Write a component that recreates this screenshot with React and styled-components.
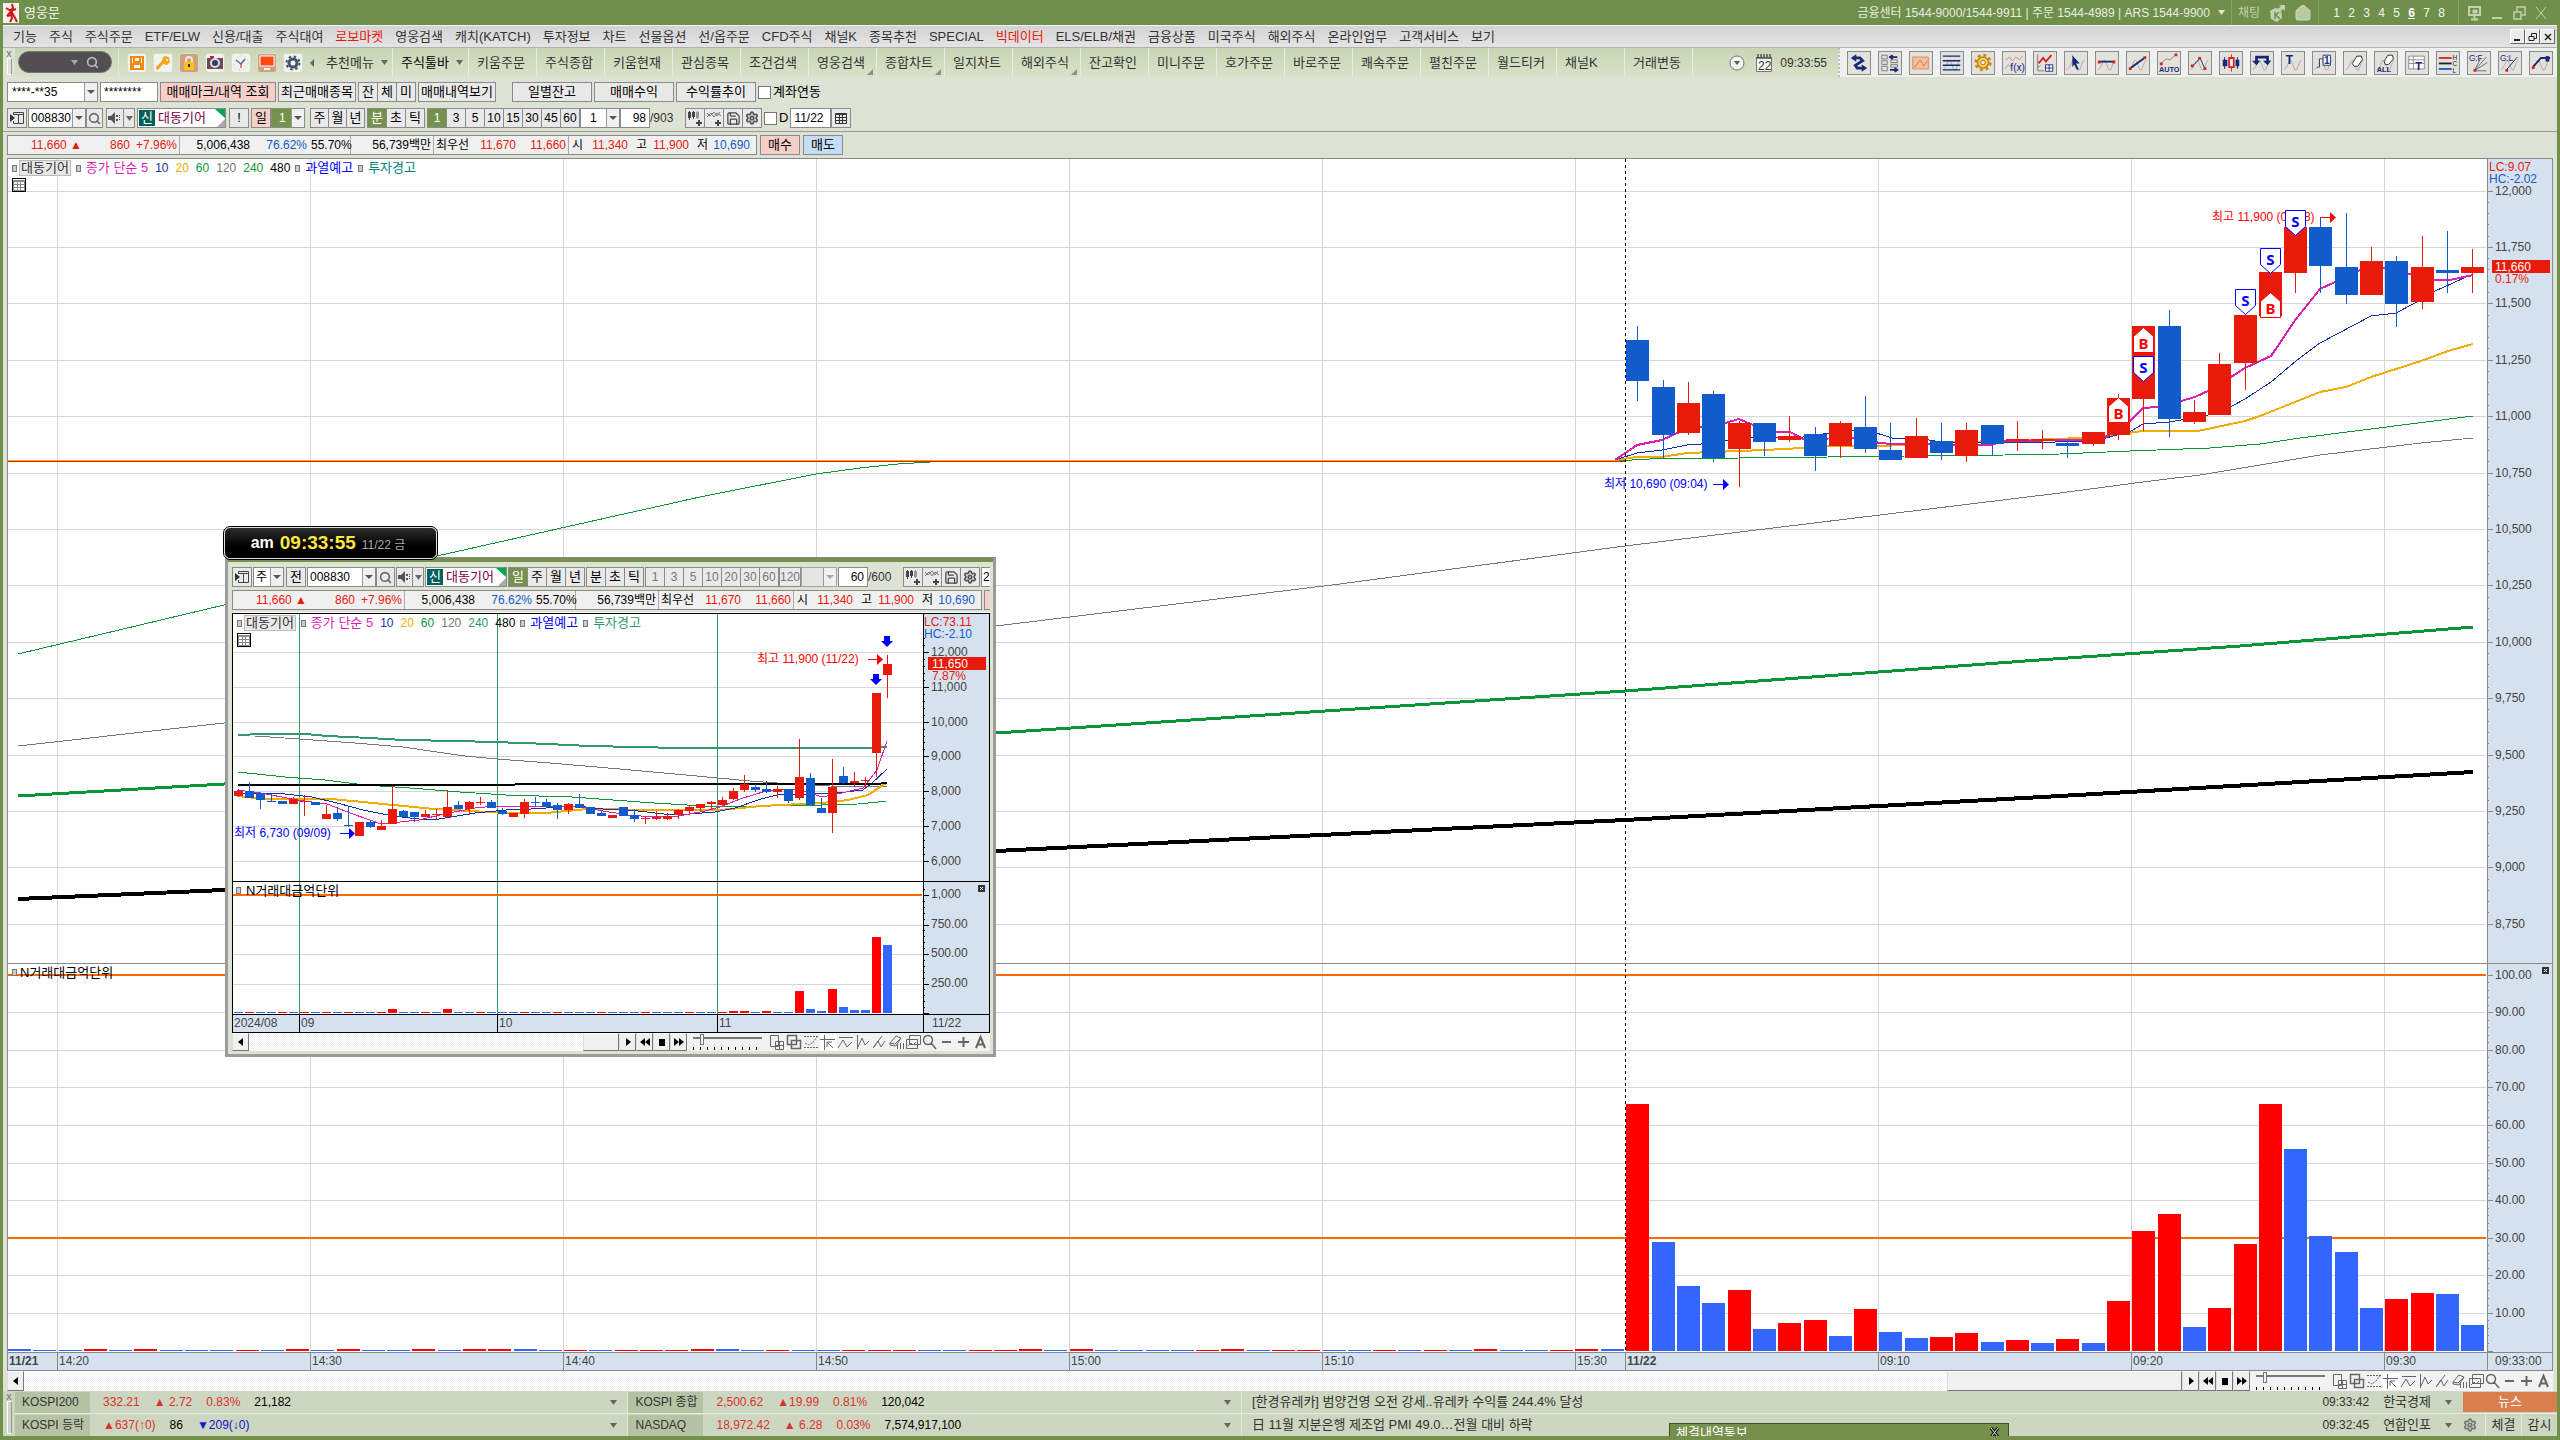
import * as React from "react";
import styled, { createGlobalStyle } from "styled-components";
import { Search, Settings, Save, Home } from "lucide-react";

const GlobalStyle = createGlobalStyle`
  * {
    box-sizing: border-box;
  }
  body {
    margin: 0;
    background: #dce2d4;
    color: #333;
    font: 13px/16px "Liberation Sans", "Noto Sans CJK KR", sans-serif;
  }
  button, input, select {
    margin: 0;
    padding: 0;
    font: inherit;
    color: inherit;
  }
  button {
    border: 0;
    background: none;
    white-space: nowrap;
  }
  svg {
    display: block;
    flex: none;
  }
  svg text {
    font: 12px "Liberation Sans", "Noto Sans CJK KR", sans-serif;
  }
`;

const RED = "#e81a0a";
const BLUE = "#125bca";
const NAVY = "#1430a8";
const MAGENTA = "#dc1eb4";
const GOLD = "#f0ac00";
const GREEN = "#0a9638";

/* ---------- window frame ---------- */

const Desktop = styled.div`
  position: relative;
  height: 100vh;
  display: flex;
  flex-direction: column;
  border-left: 3px solid #6f8f4b;
  border-right: 3px solid #6f8f4b;
  border-bottom: 4px solid #75904a;
  overflow: hidden;
`;

const TitleBar = styled.header`
  height: 25px;
  display: flex;
  align-items: center;
  background: #6f8f4b;
  color: #f2f5ec;
  .name {
    flex: 1;
    margin-left: 4px;
  }
`;

const TitleGroup = styled.div`
  height: 25px;
  display: flex;
  align-items: center;
  gap: 8px;
  padding: 0 6px;
  font-size: 12px;
  border-left: ${(p) => (p.$first ? "0" : "1px solid #86a365")};
  color: ${(p) => p.color || "#e8eee0"};
`;

const Screens = styled.div`
  display: flex;
  padding: 0 3px 0 4px;
  button {
    width: 15px;
    color: #f4f6ee;
  }
  .on {
    font-weight: bold;
    text-decoration: underline;
    color: #fff;
  }
`;

const MenuBar = styled.nav`
  height: 23px;
  display: flex;
  align-items: center;
  gap: 12px;
  padding: 0 2px 0 10px;
  border-top: 1px solid #f4f4f4;
  border-bottom: 1px solid #b0b0b0;
  background: linear-gradient(#d3d3d3, #e4e4e4);
  a {
    text-decoration: none;
    color: #333;
    white-space: nowrap;
  }
  a.hot {
    color: ${RED};
  }
  .mdi {
    margin-left: auto;
    display: flex;
  }
`;

const MdiButton = styled.button`
  width: 15px;
  height: 15px;
  display: grid;
  place-items: center;
  background: #ececec;
  border: 1px solid;
  border-color: #fff #666 #666 #fff;
`;

const ToolStrip = styled.div`
  height: 29px;
  display: flex;
  background: linear-gradient(#c9d4b4, #d9e2c9);
`;

const Grip = styled.div`
  width: 12px;
  flex: none;
  display: flex;
  flex-direction: column;
  align-items: center;
  color: #777;
  font-size: 11px;
  line-height: 10px;
  background: ${(p) => (p.$light ? "#dce2d4" : "none")};
  i {
    flex: 1;
    width: 5px;
    margin-bottom: 2px;
    border: 1px solid #fff;
    border-right-color: #999;
  }
`;

const SearchPill = styled.div`
  width: 94px;
  height: 22px;
  margin: 3px 6px 0 3px;
  padding-right: 12px;
  display: flex;
  align-items: center;
  justify-content: flex-end;
  gap: 8px;
  border-radius: 11px;
  border: 1px solid #777;
  background: #524f52;
  color: #bbb;
  input {
    flex: 1;
    min-width: 0;
    border: 0;
    background: none;
    outline: 0;
    padding-left: 10px;
  }
`;

const QuickIcons = styled.div`
  display: flex;
  align-items: center;
  gap: 6px;
  padding: 0 7px 0 8px;
  border-left: 1px solid #e2e9d6;
  button {
    width: 20px;
    height: 20px;
    display: grid;
    place-items: center;
    border-radius: 3px;
    border: 1px solid #d9dccf;
    background: #f2f2ee;
  }
  .brown {
    background: #cf9f80;
  }
`;

const StripTab = styled.button`
  position: relative;
  flex: none;
  width: ${(p) => p.$w || 68}px;
  padding: 0 0 0 8px;
  display: flex;
  align-items: center;
  gap: 7px;
  border-right: 1px solid #e6ecdb;
  color: ${(p) => (p.$strong ? "#000" : "#333")};
  &::after {
    content: "";
    display: ${(p) => (p.$corner ? "block" : "none")};
    position: absolute;
    right: 3px;
    bottom: 2px;
    border: 3px solid #8b9480;
    border-top-color: transparent;
    border-left-color: transparent;
  }
`;

const StripClock = styled.div`
  margin-left: auto;
  display: flex;
  align-items: center;
  gap: 7px;
  padding-right: 11px;
  svg + svg {
    margin-left: 3px;
  }
  span {
    font-size: 12px;
  }
`;

const DrawTools = styled.div`
  display: flex;
  align-items: center;
  gap: 7px;
  padding: 0 4px 0 7px;
  background: #f0f0f0;
  border-left: 2px dotted #bbb;
  button {
    width: 24px;
    height: 24px;
    border: 1px solid #8c8c8c;
    background: #e3e1dc;
  }
`;

/* ---------- controls ---------- */

const ControlRow = styled.div`
  display: flex;
  align-items: center;
  gap: ${(p) => p.$gap || 0}px;
  height: 20px;
  white-space: nowrap;
  overflow: hidden;
`;

const Count = styled.span`
  width: 31px;
  flex: none;
  font-size: 12px;
`;

const Button = styled.button`
  flex: none;
  width: ${(p) => p.$w}px;
  height: 20px;
  display: grid;
  place-items: center;
  border: 1px solid #8a8a8a;
  font-size: ${(p) => (p.$small ? 12 : 13)}px;
  color: ${(p) => (p.$on ? "#fff" : p.$dim ? "#777" : "#000")};
  background: ${(p) => (p.$on ? "#75924c" : p.$bg || "#e9e9e9")};
`;

const Group = styled.div`
  flex: none;
  display: flex;
  margin-right: ${(p) => p.$mr || 0}px;
  ${Button} + ${Button} {
    border-left: 0;
  }
`;

const TextBox = styled.input`
  flex: none;
  width: ${(p) => p.$w}px;
  height: 20px;
  padding: 0 ${(p) => p.$pad || 3}px;
  border: 1px solid #8a8a8a;
  border-radius: 0;
  font-size: 12px;
  background: #fff;
  color: #000;
  text-align: ${(p) => p.$align || "left"};
`;

const SelectWrap = styled.span`
  position: relative;
  flex: none;
  width: ${(p) => p.$w}px;
  height: 20px;
  select {
    width: 100%;
    height: 20px;
    padding: 0 13px 0 ${(p) => p.$pad || 2}px;
    appearance: none;
    border: 1px solid #8a8a8a;
    border-radius: 0;
    font-size: 12px;
    color: ${(p) => (p.$on ? "#fff" : "#000")};
    background: ${(p) => (p.$on ? "#75924c" : p.$off ? "#e9e9e9" : "#fff")};
  }
  svg {
    position: absolute;
    top: 1px;
    right: 1px;
    pointer-events: none;
  }
`;

const Check = styled.label`
  flex: none;
  display: flex;
  align-items: center;
  gap: 2px;
  color: #000;
  input {
    appearance: none;
    width: 13px;
    height: 13px;
    border: 1px solid #777;
    background: #fff;
  }
`;

const StockName = styled.div`
  flex: none;
  width: ${(p) => p.$w}px;
  height: 20px;
  display: flex;
  align-items: center;
  justify-content: space-between;
  border: 1px solid #8a8a8a;
  background: #fff;
  color: #7a0046;
  b {
    width: 16px;
    height: 16px;
    margin: 0 3px 0 1px;
    display: grid;
    place-items: center;
    font-weight: normal;
    background: #00605c;
    color: #fff;
  }
  span {
    flex: 1;
  }
`;

const Quote = styled.div`
  flex: none;
  width: 750px;
  height: 20px;
  display: flex;
  align-items: center;
  border: 1px solid #8a8a8a;
  background: #f0f0f0;
  color: #000;
  font-size: 12px;
`;

const Cell = styled.span`
  width: ${(p) => p.$w}px;
  height: 18px;
  line-height: 18px;
  padding: 0 2px;
  text-align: ${(p) => p.$align || "right"};
  color: ${(p) => p.color || "#000"};
  border-right: ${(p) => (p.$line ? "1px solid #aaa" : "0")};
`;

const Down = ({ color = "#666" }) => (
  <svg width="7" height="5"><path d="M0 0h7L3.5 5z" fill={color} /></svg>
);

function Arrow({ dim }) {
  return (
    <svg width="13" height="18" viewBox="0 0 13 18">
      <rect width="13" height="18" fill="#f0f0f0" />
      <path d="M0.5 0V18" stroke="#999" />
      <path d="M3 7h8l-4 4z" fill={dim ? "#aaa" : "#555"} />
    </svg>
  );
}

function Select({ label, value, w, on, disabled, pad }) {
  return (
    <SelectWrap $w={w} $on={on} $pad={pad} $off={disabled}>
      <select aria-label={label} disabled={disabled}>
        <option>{value}</option>
      </select>
      <Arrow dim={disabled} />
    </SelectWrap>
  );
}

function Buttons({ items, on, w = 19, dim, mr, small }) {
  return (
    <Group $mr={mr}>
      {items.map((t, i) => (
        <Button key={t} $w={i ? w : w + 1} $on={t === on} $dim={dim} $small={small}>
          {t}
        </Button>
      ))}
    </Group>
  );
}

function QuoteBar() {
  return (
    <Quote>
      <Cell $w={76} color={RED}>11,660 ▲</Cell>
      <Cell $w={48} color={RED}>860</Cell>
      <Cell $w={48} color={RED} $line>+7.96%</Cell>
      <Cell $w={72}>5,006,438</Cell>
      <Cell $w={57} color={BLUE}>76.62%</Cell>
      <Cell $w={42} $line>55.70%</Cell>
      <Cell $w={83} $line>56,739백만</Cell>
      <Cell $w={42} $align="left">최우선</Cell>
      <Cell $w={42} color={RED}>11,670</Cell>
      <Cell $w={51} color={RED} $line>11,660</Cell>
      <Cell $w={16}>시</Cell>
      <Cell $w={45} color={RED}>11,340</Cell>
      <Cell $w={19}>고</Cell>
      <Cell $w={42} color={RED}>11,900</Cell>
      <Cell $w={19}>저</Cell>
      <Cell $w={42} color={BLUE}>10,690</Cell>
    </Quote>
  );
}

const PanelIcon = () => (
  <svg width="16" height="14" viewBox="0 0 16 14" fill="none" stroke="#444">
    <path d="M4.5 4V1.5h10v11h-10V10M5 3.5h9M9.5 4v8" />
    <path d="M1 3l5 4-5 4z" fill="#333" stroke="none" />
  </svg>
);

const SpeakerIcon = () => (
  <svg width="14" height="14" viewBox="0 0 14 14" fill="#555">
    <path d="M0 5h3l4-4v12L3 9H0zM8 4h2v2H8zM8 8h2v2H8zM11 4h1v1h-1zM11 6h1v1h-1zM11 8h1v1h-1z" />
  </svg>
);

const CandlePlusIcon = () => (
  <svg width="16" height="16" viewBox="0 0 16 16" fill="#444">
    <path d="M2 1h1v1h1v6H3v2H2V8H1V2h1zM6 1h1v1h1v5H7v2H6V7H5V2h1z" />
    <path d="M10 1h1v1h1v6h-1v1h-1V8H9V2h1z" fill="#999" />
    <path d="M11 10h2v2h2v2h-2v2h-2v-2H9v-2h2z" />
  </svg>
);

const WavePlusIcon = () => (
  <svg width="16" height="16" viewBox="0 0 16 16" fill="none" stroke="#777">
    <path d="M1 7l4-4 3 4 3-4 4 3M1 3l3 3 4-4 3 4 3-4" />
    <path d="M11 10h2v2h2v2h-2v2h-2v-2H9v-2h2z" fill="#444" stroke="none" />
  </svg>
);

const CalendarIcon = ({ color = "#333" }) => (
  <svg width="12" height="12" viewBox="0 0 12 12" fill="none" stroke={color}>
    <path d="M0.5 1.5h11v10h-11zM1 2.5h10M1 5.5h10M1 8.5h10M4.5 3v8M7.5 3v8" />
  </svg>
);

const Corner = () => (
  <svg width="10" height="18" viewBox="0 0 10 18">
    <path d="M0 0h10v9z" fill="#00a650" />
    <path d="M10 10v8H2z" fill="#aaa" />
  </svg>
);

function ChartTools({ mr }) {
  return (
    <Group $mr={mr}>
      <Button $w={20} aria-label="봉 추가"><CandlePlusIcon /></Button>
      <Button $w={19} aria-label="지표 추가"><WavePlusIcon /></Button>
      <Button $w={19} aria-label="저장"><Save size={15} color="#444" /></Button>
      <Button $w={19} aria-label="설정"><Settings size={14} color="#555" strokeWidth={3} /></Button>
    </Group>
  );
}

/* ---------- toolbar icons ---------- */

const wave = <path d="M2 19l3-3 3-7h2l4 10h2l3-8 2-3" stroke="#aaa" />;
const N = "#142a78";
const R = "#d82020";

const drawIcons = [
  ["되돌리기", <g><path d="M8 6h5l3 3-8 5 2 3h6" stroke={N} strokeWidth="3" /><path d="M9 2v8L3 6zM15 13v8l6-4z" fill={N} /></g>],
  ["연결", <g><path d="M3 3h6v4H3zM3 9h6v4H3zM3 15h6v5H3zM13 8h7v3h-7zM13 13h7v3h-7z" stroke="#777" /><path d="M20 5h-8m3-2l-3 2 3 2M12 19h8m-3-2l3 2-3 2" stroke={N} strokeWidth="2" /></g>],
  ["영역", <g><path d="M3 5h17v13H3z" fill="#f6c0a0" stroke="#e08850" /><path d="M4 16l3-2 3-5h2l3 6 4-6" stroke="#d07a40" /></g>],
  ["수평선", <g>{wave}<path d="M2 4h19M2 9h19M2 14h19M2 19h19" stroke={N} strokeWidth="1.5" /></g>],
  ["설정", <g><circle cx="12" cy="11" r="8" stroke="#c88a18" strokeWidth="3" strokeDasharray="3.2 3.1" /><circle cx="12" cy="11" r="6" stroke="#c88a18" strokeWidth="2" fill="#ffd468" /><circle cx="12" cy="11" r="2.5" fill="#eee" stroke="#a86a00" /></g>],
  ["수식", <g><path d="M3 8l4-3 3 4 4-4 4 3 3-4" stroke="#e08080" /><path d="M2 18l4-5 3 4" stroke="#aaa" /><text x="8" y="20" fill={N} style={{ fontSize: 11 }}>f(x)</text></g>],
  ["분석", <g><path d="M4 2v18h7M4 17l3-3" stroke="#777" /><path d="M5 12l5-6 3 4 6-7" stroke={R} strokeWidth="2" /><path d="M12.5 13.5h8v7h-8zM16.5 13v7M12 17h8" fill="#fff" stroke={N} /></g>],
  ["선택", <g>{wave}<path d="M8 3l8 9h-4l3 6-2 1-3-6-2 3z" fill={N} /></g>],
  ["가로선", <g>{wave}<path d="M3 10h17" stroke={N} strokeWidth="2" /><path d="M2 9h3v3H2zM18 9h3v3h-3z" fill={R} /></g>],
  ["추세선", <g>{wave}<path d="M4 17L19 6" stroke={N} strokeWidth="2" /><path d="M2 16h3v3H2zM18 4h3v3h-3z" fill={R} /></g>],
  ["자동", <g><path d="M3 12l6-5 4 1 7-6" stroke="#888" /><path d="M2 11h3v3H2zM18 1h3v3h-3z" fill={R} /><text x="1" y="21" fill={N} style={{ fontSize: 8, fontWeight: 700 }}>AUTO</text></g>],
  ["파동", <g>{wave}<path d="M4 14l4-3 4-5 5 11" stroke={N} /><path d="M2 13h3v3H2zM10 5h3v3h-3zM16 16h3v3h-3z" fill={R} /></g>],
  ["봉", <g><path d="M5 5v13M19 5v13" stroke={N} /><path d="M3 8h5v7H3zM17 8h4v7h-4z" fill={N} /><path d="M10 6h5v10h-5z" fill="#fff" stroke={R} strokeWidth="2" /><path d="M12.5 2v3M12.5 17v4" stroke={R} /></g>],
  ["회전", <g>{wave}<path d="M6 11V5h12v6" stroke={N} strokeWidth="3" /><path d="M1 9h9l-4 5zM13 9h9l-4 5z" fill={N} /></g>],
  ["문자", <g>{wave}<text x="4" y="13" fill={N} style={{ fontSize: 13, fontWeight: 700 }}>T</text></g>],
  ["번호", <g>{wave}<path d="M4 16h3V7h4M11 3h8v11h-8z" fill="#fff" stroke={N} /><text x="12" y="13" fill={N} style={{ fontSize: 11, fontWeight: 700 }}>1</text></g>],
  ["지우개", <g>{wave}<path d="M9 12l5-8h5l1 4-5 7h-4z" fill="#fff" stroke="#222" /></g>],
  ["모두 지우기", <g>{wave}<path d="M10 10l4-7h5l1 4-5 6h-4z" fill="#fff" stroke="#222" /><text x="2" y="21" fill={N} style={{ fontSize: 8, fontWeight: 700 }}>ALL</text></g>],
  ["표", <g><path d="M3 4h17v14H3zM3 8h17M3 12h17M8 4v14" fill="#fff" stroke="#888" /><text x="10" y="19" fill={N} style={{ fontSize: 12, fontWeight: 700 }}>T</text></g>],
  ["고저", <g><path d="M2 6h14" stroke={R} strokeWidth="2" /><path d="M2 12h14" stroke="#222" strokeWidth="2" /><path d="M2 18h14" stroke={BLUE} strokeWidth="2" /><text x="17" y="8" fill="#222" style={{ fontSize: 7 }}>H</text><text x="17" y="15" fill="#222" style={{ fontSize: 7 }}>C</text><text x="17" y="22" fill="#222" style={{ fontSize: 7 }}>L</text></g>],
  ["간 팬", <g><path d="M7 20L20 5M7 20l14-9M7 20h13M7 20L14 6" stroke="#667" /><path d="M6 18h3v3H6z" fill={R} /><text x="1" y="9" fill={N} style={{ fontSize: 9 }}>G:F</text></g>],
  ["간 선", <g>{wave}<path d="M8 19L20 5" stroke={N} /><path d="M7 18h3v3H7z" fill={R} /><text x="1" y="9" fill={N} style={{ fontSize: 9 }}>G:L</text></g>],
  ["채널", <g>{wave}<path d="M3 16l9-10h10" stroke={N} strokeWidth="2" /><path d="M17 4h4v6h-4z" fill={N} /><path d="M2 15h3v3H2z" fill={R} /></g>],
];

const quickIcons = [
  ["저장", "", <path d="M2 2h12v12H2zM5 2h6v5H5zM4 9h8v5H4z" fill="#fff" stroke="#f08a10" strokeWidth="2" />],
  ["열쇠", "", <g><path d="M10 1l4 1 1 5-3 3-4-1-5 6-2-1v-2l6-6 1-4z" fill="#f8a820" /><circle cx="12" cy="5" r="1" fill="#fff" /></g>],
  ["잠금", "brown", <g><path d="M5 8V5a3 3 0 016 0v3" stroke="#f5ead0" strokeWidth="2" /><path d="M3 7h10v8H3z" fill="#ffc020" /><path d="M8 9v3" stroke="#333" strokeWidth="2" /></g>],
  ["화면 캡처", "", <g><path d="M0 3h16v11H0z" fill="#6b4a52" /><path d="M3 1h4v2H3z" fill={R} /><circle cx="8" cy="8" r="5" fill="#ddd" /><circle cx="8" cy="8" r="3" fill="#30406a" /></g>],
  ["시계", "", <g stroke="#667"><circle cx="8" cy="8" r="7" stroke="#bbb" strokeDasharray="1 3" /><path d="M3 5l5 4 4-5" strokeWidth="1.5" /><path d="M8 9v4" stroke={R} /></g>],
  ["모니터", "brown", <g><path d="M1 1h14v10H1z" fill="#ff4a10" stroke="#fff" /><path d="M5 14h6" stroke="#fff" strokeWidth="2" /></g>],
  ["설정", "", <g><circle cx="8" cy="8" r="4" stroke="#46566a" strokeWidth="3" /><circle cx="8" cy="8" r="6.5" stroke="#46566a" strokeWidth="2" strokeDasharray="2.5 2.6" /></g>],
];

/* ---------- chart ---------- */

const ChartBox = styled.section`
  position: relative;
  flex: 1;
  min-height: 0;
  margin: 0 4px;
  background: #fff;
  > svg {
    width: 100%;
    height: 100%;
  }
`;

const Legend = styled.div`
  position: absolute;
  top: 2px;
  left: 5px;
  display: flex;
  align-items: center;
  gap: 5px;
  font-size: 12px;
  white-space: nowrap;
  i {
    width: 5px;
    height: 7px;
    border: 1px solid #777;
    background: #ccc;
  }
  b {
    font-size: 13px;
    font-weight: normal;
    margin-left: -3px;
    padding: 0 1px;
    border: 1px solid #bbb;
    background: #e8e8e8;
    line-height: 14px;
  }
  span + span {
    margin-left: 2px;
  }
  .wide {
    font-size: 13px;
  }
`;

const TableButton = styled.button`
  position: absolute;
  top: 20px;
  left: 5px;
  width: 14px;
  height: 14px;
  display: grid;
  place-items: center;
  border: 1px solid #000;
  background: #fff;
`;

function ChartLegend({ alt }) {
  return (
    <>
      <Legend>
        <i />
        <b>대동기어</b>
        <i />
        <span className="wide" style={{ color: MAGENTA }}>종가 단순 5</span>
        <span style={{ color: NAVY }}>10</span>
        <span style={{ color: GOLD }}>20</span>
        <span style={{ color: GREEN }}>60</span>
        <span style={{ color: "#777" }}>120</span>
        <span style={{ color: alt ? "#339966" : GREEN }}>240</span>
        <span style={{ color: "#000" }}>480</span>
        <i />
        <span className="wide" style={{ color: "#00f" }}>과열예고</span>
        <i />
        <span className="wide" style={{ color: alt ? "#339966" : "#008080" }}>투자경고</span>
      </Legend>
      <TableButton aria-label="데이터 표">
        <CalendarIcon color="#888" />
      </TableButton>
    </>
  );
}

const fmt = (n) => n.toLocaleString("en-US");

// kind, left, body top, body bottom, high, low
const candles = [
  ["b", 1626, 340, 381, 326, 401],
  ["b", 1652, 387, 435, 380, 459],
  ["r", 1677, 403, 433, 382, 435],
  ["b", 1702, 394, 458, 391, 462],
  ["r", 1728, 423, 449, 421, 487],
  ["b", 1753, 423, 442, 423, 456],
  ["r", 1778, 436, 440, 416, 442],
  ["b", 1804, 434, 456, 427, 471],
  ["r", 1829, 423, 446, 421, 458],
  ["b", 1854, 427, 449, 396, 453],
  ["b", 1879, 450, 460, 423, 460],
  ["r", 1905, 436, 458, 418, 458],
  ["b", 1930, 441, 453, 423, 460],
  ["r", 1955, 430, 456, 423, 462],
  ["b", 1981, 425, 444, 425, 456],
  ["r", 2006, 439, 441, 421, 451],
  ["r", 2031, 439, 441, 430, 449],
  ["b", 2056, 443, 446, 439, 458],
  ["r", 2082, 432, 444, 432, 446],
  ["r", 2107, 398, 435, 394, 440],
  ["r", 2132, 326, 399, 326, 431],
  ["b", 2158, 326, 419, 310, 437],
  ["r", 2183, 412, 422, 400, 424],
  ["r", 2208, 364, 415, 353, 415],
  ["r", 2234, 315, 363, 315, 390],
  ["r", 2259, 272, 316, 272, 316],
  ["r", 2284, 227, 273, 227, 293],
  ["b", 2309, 227, 266, 218, 293],
  ["b", 2335, 267, 295, 213, 304],
  ["r", 2360, 261, 295, 247, 295],
  ["b", 2385, 261, 304, 256, 327],
  ["r", 2411, 267, 302, 236, 309],
  ["b", 2436, 270, 273, 231, 293],
  ["r", 2461, 267, 273, 249, 293],
];

const volumeKinds = "rbbbrbrrbrbbrrbrbrbrrrbrrrbbbbrrbb";
const volumeTops = [
  1104, 1242, 1286, 1303, 1290, 1329, 1323, 1320, 1336, 1309, 1332, 1338, 1337,
  1333, 1342, 1340, 1343, 1339, 1343, 1301, 1231, 1214, 1327, 1308, 1244, 1104,
  1149, 1236, 1252, 1308, 1299, 1293, 1294, 1325,
];
// upper case marks a slightly taller bar
const oldVolume =
  "BbbRbRbbbrbRbRbbRbRRBbrbrrrRBbrbbrrrbbrrRbRbbbbrRbrrbbrbrbRbbrRB";

const mainLines = [
  ["#777", 1, "18,746 224,723 620,684 996,626 1340,584 1625,546 1921,510 2060,493 2143,482 2200,475 2320,455 2421,443 2473,438"],
  [GREEN, 1, "18,654 224,605 437,556 597,520 700,497 816,474 860,468 898,464 947,461 1615,461 1650,459 1739,458 1828,457 1905,456 2005,455 2060,454 2130,451 2210,448 2260,444 2300,438 2371,429 2473,416"],
  [GREEN, 3, "18,796 224,784 996,733 1625,691 2025,661 2240,646 2473,627"],
  ["#000", 4, "18,899 224,890 996,851 1625,820 2060,796 2473,772"],
  [GOLD, 2, "1615,460 1637,457 1662,457 1687,453 1739,451 1765,450 1803,448 1829,446 1880,446 1930,444 1955,442 2005,441 2055,439 2082,438 2106,436 2143,431 2198,431 2245,421 2260,416 2320,392 2346,387 2371,377 2396,369 2421,361 2448,351 2473,344"],
  [NAVY, 1, "1615,460 1637,453 1662,450 1687,445 1715,443 1739,438 1765,437 1803,437 1830,433 1855,430 1867,430 1892,438 1918,438 1940,442 1975,443 2005,442 2055,442 2082,441 2106,438 2131,431 2143,424 2170,422 2208,415 2232,406 2245,399 2271,382 2296,361 2320,343 2371,316 2396,313 2415,303 2435,291 2473,274"],
  [MAGENTA, 2, "1615,460 1637,445 1662,440 1677,433 1700,427 1725,423 1739,419 1753,425 1765,432 1790,432 1803,439 1855,438 1880,443 1892,444 1991,445 2005,441 2082,440 2106,437 2130,421 2143,408 2158,407 2181,401 2195,397 2208,391 2231,377 2245,368 2271,356 2296,319 2320,289 2335,282 2360,270 2383,268 2410,274 2435,280 2450,280 2473,275"],
];

function Lines({ data }) {
  return data.map(([stroke, width, points]) => (
    <polyline
      key={stroke + width + points.length}
      points={points}
      fill="none"
      stroke={stroke}
      strokeWidth={width}
      shapeRendering="crispEdges"
    />
  ));
}

function Candles({ data, width }) {
  const mid = Math.floor(width / 2);
  return data.map(([kind, x, top, bottom, high, low]) => (
    <g key={x} fill={kind === "r" ? RED : BLUE}>
      <rect x={x} y={top} width={width} height={Math.max(bottom - top, 1)} />
      <rect x={x + mid} y={high} width="1" height={low - high} />
    </g>
  ));
}

function Marker({ type, x, y }) {
  const buy = type === "B";
  const color = buy ? "#f00" : "#00f";
  return (
    <g transform={`translate(${x} ${y})`}>
      <path
        d={buy ? "M0.5 9.5L10.5 0.5L20.5 9.5V25.5H0.5Z" : "M0.5 0.5H20.5V16.5L10.5 25.5L0.5 16.5Z"}
        fill="#fff"
        stroke={color}
      />
      <text
        x="10.5"
        y={buy ? 22 : 17}
        textAnchor="middle"
        fill={color}
        style={{ fontFamily: "Noto Sans", fontSize: 15, fontWeight: 700 }}
      >
        {type}
      </text>
    </g>
  );
}

const range = (n) => Array.from({ length: n }, (_, i) => i);

function MainChart() {
  const priceY = (p) => Math.floor(191 + (12000 - p) * 0.2256) + 0.5;
  const volY = (v) => Math.floor(1351 - v * 3.76) + 0.5;
  const times = [
    [57, "14:20"],
    [310, "14:30"],
    [563, "14:40"],
    [816, "14:50"],
    [1069, "15:00"],
    [1322, "15:10"],
    [1575, "15:30"],
    [1878, "09:10"],
    [2131, "09:20"],
    [2384, "09:30"],
  ];
  return (
    <ChartBox>
      <svg viewBox="7 158 2546 1213" preserveAspectRatio="xMinYMin meet">
        <rect x="2487" y="158" width="66" height="1213" fill="#d6e1ef" />
        <rect x="7" y="1353" width="2546" height="18" fill="#d6e1ef" />
        <g stroke="#d6d6d6">
          {range(14).map((i) => (
            <path key={i} d={`M8 ${priceY(12000 - i * 250)}H2486`} />
          ))}
          {range(9).map((i) => (
            <path key={i} d={`M8 ${volY(10 + i * 10)}H2486`} />
          ))}
          {times.map(([x]) => (
            <path key={x} d={`M${x + 0.5} 159V1352`} />
          ))}
        </g>
        <g fill="#ff6a00">
          <rect x="8" y="974" width="2478" height="2" />
          <rect x="8" y="1237" width="2478" height="2" />
        </g>
        <Lines data={mainLines} />
        <rect x="8" y="460" width="1608" height="1" fill={GOLD} />
        <rect x="8" y="461" width="1618" height="1" fill={RED} />
        <Candles data={candles} width={23} />
        <path
          d="M1625.5 159V1352"
          stroke="#000"
          strokeDasharray="3 3"
          shapeRendering="crispEdges"
        />

        {volumeTops.map((y, i) => (
          <rect
            key={i}
            x={candles[i][1]}
            y={y}
            width="23"
            height={1351 - y}
            fill={volumeKinds[i] === "r" ? "#f00" : "#36f"}
          />
        ))}
        {[...oldVolume].map((c, i) => {
          const h = c < "a" ? 2 : 1;
          return (
            <rect
              key={i}
              x={Math.round(8 + i * 25.28)}
              y={1351 - h}
              width="23"
              height={h}
              fill={c.toLowerCase() === "r" ? "#f00" : "#36f"}
            />
          );
        })}

        <g fill="#f00">
          <text x="2212" y="221">최고 11,900 (09:28)</text>
          <path d="M2320 217h10v-5l6 5.5-6 5.5v-5h-10z" />
        </g>
        <g fill="#00f">
          <text x="1604" y="488">최저 10,690 (09:04)</text>
          <path d="M1713 484h10v-5l6 5.5-6 5.5v-5h-10z" />
        </g>
        <Marker type="B" x={2108} y={397} />
        <Marker type="B" x={2133} y={327} />
        <Marker type="S" x={2133} y={356} />
        <Marker type="S" x={2235} y={289} />
        <Marker type="S" x={2260} y={248} />
        <Marker type="B" x={2260} y={292} />
        <Marker type="S" x={2285} y={210} />

        <g stroke="#888">
          <path d="M7 158.5H2553M7.5 158V1371M2487.5 159V1371M2552.5 158V1371" />
          <path d="M7 963.5H2553M7 1352.5H2553M7 1370.5H2553" />
          {times.map(([x]) => (
            <path key={x} d={`M${x + 0.5} 1353v17`} />
          ))}
          <path d="M1625.5 1353v17" />
          {range(66).map((i) => (
            <path key={i} d={`M2487 ${priceY(12000 - i * 50)}h${i % 5 ? 2 : 6}`} />
          ))}
          {range(51).map((i) => (
            <path key={i} d={`M2487 ${volY(i * 2)}h${i % 5 ? 2 : 6}`} />
          ))}
        </g>
        <g fill="#444">
          {range(14).map((i) => (
            <text key={i} x="2495" y={Math.floor(priceY(12000 - i * 250)) + 4}>
              {fmt(12000 - i * 250)}
            </text>
          ))}
          {range(10).map((i) => (
            <text key={i} x="2495" y={Math.floor(volY(10 + i * 10)) + 4}>
              {10 + i * 10}.00
            </text>
          ))}
          {times.map(([x, t]) => (
            <text key={x} x={x + 2} y="1365">{t}</text>
          ))}
          <text x="9" y="1365" style={{ fontWeight: 700 }}>11/21</text>
          <text x="1627" y="1365" style={{ fontWeight: 700 }}>11/22</text>
          <text x="2495" y="1365">09:33:00</text>
        </g>
        <text x="2489" y="171" fill={RED}>LC:9.07</text>
        <text x="2489" y="183" fill={BLUE}>HC:-2.02</text>
        <rect x="2492" y="260" width="58" height="13" fill={RED} />
        <text x="2495" y="271" fill="#fff">11,660</text>
        <text x="2495" y="283" fill={RED}>0.17%</text>
        <rect x="12.5" y="969.5" width="4" height="6" fill="#ccc" stroke="#777" />
        <text x="20" y="977" fill="#000" style={{ fontSize: 13 }}>N거래대금억단위</text>
        <rect x="2542" y="967" width="7" height="7" fill="#333" />
        <path d="M2544 969l3 3m0-3l-3 3" stroke="#fff" />
      </svg>
      <ChartLegend />
    </ChartBox>
  );
}

/* ---------- scroll strip under a chart ---------- */

const ScrollStrip = styled.div`
  height: ${(p) => p.$h}px;
  display: flex;
  align-items: stretch;
  margin: ${(p) => p.$margin || "0"};
  background: #f2f2f2;
`;

const Track = styled.div`
  flex: 1;
  display: flex;
  justify-content: flex-end;
  background: repeating-conic-gradient(#f2f2f2 0 25%, #fff 0 50%) 0 0 / 2px 2px;
  div {
    width: ${(p) => p.$thumb}px;
    background: #f0f0f0;
    border: 1px solid;
    border-color: #fff #777 #777 #ddd;
  }
`;

const ScrollButton = styled.button`
  width: 17px;
  display: grid;
  place-items: center;
  background: #f0f0f0;
  border: 1px solid;
  border-color: #fff #777 #777 #ddd;
`;

const Zoomer = styled.label`
  width: 69px;
  margin: 0 7px 0 6px;
  display: flex;
  flex-direction: column;
  justify-content: space-between;
  input {
    appearance: none;
    width: 69px;
    height: 12px;
    background: linear-gradient(#777, #777) 0 4px / 100% 2px no-repeat;
  }
  input::-webkit-slider-thumb {
    appearance: none;
    width: 4px;
    height: 11px;
    border: 1px solid #777;
    background: #f2f2f2;
  }
  span {
    height: 3px;
    margin-bottom: 1px;
    background: repeating-linear-gradient(90deg, #000 0 1px, transparent 1px 7px);
  }
`;

const StripIcons = styled.div`
  display: flex;
  align-items: center;
  button {
    width: 17px;
    height: 17px;
  }
  .on {
    background: #fff;
  }
`;

const stripIcons = [
  ["복사", <path d="M1.5 1.5h8v11h-8zM6.5 7.5h8v8h-8zM10.5 8v8M7 11.5h8" />],
  ["겹침", <path d="M1.5 1.5h9v9h-9zM5.5 6.5h9v8h-9z" fill="#f2f2f2" strokeWidth="1.5" />],
  ["점선", <path d="M1 2.5h14M1 13.5h14M2 9l4 2 4-3 4-5" strokeDasharray="2 1" />],
  ["십자", <path d="M0 5.5h15M4.5 1v15M7 8l6 6M7 13V8h5" />],
  ["추세", <path d="M2 3.5h14M1 14l5-8 4 7 5-5" />],
  ["파동", <path d="M3.5 1v14M4 13l4-9 3 7 4-4" />],
  ["교차", <path d="M2 14l9-12M3 13l4-6 3 6 4-6" />],
  ["모두 삭제", <path d="M2 9l6-7 5 2-5 8-6-1zM2 9l5 1 6-6M9.5 9v6M12.5 9v6M15.5 9v6" />],
  ["복제", <path d="M4.5 1.5h11v9h-11zM1.5 5.5h11v9h-11zM3 12l3-3 2 2 3-3" fill="#f2f2f2" />],
  ["확대경", <path d="M6 1.5a4.5 4.5 0 100 9 4.5 4.5 0 100-9M9 9l5 6" strokeWidth="1.5" />],
  ["축소", <path d="M3 8h9" strokeWidth="2" />],
  ["확대", <path d="M2 8h11M7.5 3v10" strokeWidth="2" />],
  ["자동 맞춤", <path d="M3 14L7.5 3 12 14M5 10.5h6" strokeWidth="2" />],
];

function ChartScroll({ thumb, h, margin }) {
  return (
    <ScrollStrip $h={h} $margin={margin}>
      <ScrollButton aria-label="왼쪽으로">
        <svg width="6" height="8"><path d="M5 0v8L0 4z" /></svg>
      </ScrollButton>
      <Track $thumb={thumb}><div /></Track>
      <ScrollButton aria-label="오른쪽으로">
        <svg width="6" height="8"><path d="M1 0v8l5-4z" /></svg>
      </ScrollButton>
      <ScrollButton aria-label="뒤로">
        <svg width="10" height="8"><path d="M5 0v8L0 4zM10 0v8L5 4z" /></svg>
      </ScrollButton>
      <ScrollButton aria-label="정지">
        <svg width="6" height="7"><path d="M0 0h6v7H0z" /></svg>
      </ScrollButton>
      <ScrollButton aria-label="앞으로">
        <svg width="10" height="8"><path d="M0 0v8l5-4zM5 0v8l5-4z" /></svg>
      </ScrollButton>
      <Zoomer>
        <input type="range" defaultValue="10" aria-label="확대 비율" />
        <span />
      </Zoomer>
      <StripIcons>
        {stripIcons.map(([label, icon], i) => (
          <button key={label} aria-label={label} className={i === 3 ? "on" : ""}>
            <svg width="17" height="17" fill="none" stroke="#666">{icon}</svg>
          </button>
        ))}
      </StripIcons>
    </ScrollStrip>
  );
}

/* ---------- floating daily chart ---------- */

const FloatWindow = styled.section`
  position: absolute;
  top: 557px;
  left: 222px;
  width: 771px;
  padding: 9px 3px 3px 4px;
  border: 3px solid #9c9c9c;
  border-top: 1px solid #8a8a8a;
  background: #dce2d4;
  box-shadow: inset 0 4px #798f4c;
`;

const FloatRows = styled.div`
  display: flex;
  flex-direction: column;
  gap: 3px;
`;

const FloatChart = styled.div`
  position: relative;
  width: 758px;
  margin-top: 2px;
  border-top: 1px solid #fff;
  background: #fff;
  > svg {
    width: 100%;
  }
`;

const Clock = styled.div`
  position: absolute;
  top: 527px;
  left: 221px;
  width: 213px;
  height: 32px;
  padding-right: 5px;
  display: flex;
  align-items: center;
  justify-content: center;
  gap: 6px;
  border: 1px solid #ddd;
  outline: 1px solid #000;
  border-radius: 6px;
  background: linear-gradient(#2e2e2e, #000 60%);
  color: #fff;
  font: bold 16px "Liberation Sans", sans-serif;
  time {
    font-size: 19px;
    color: #ffe640;
  }
  small {
    font: 12px "Liberation Sans", "Noto Sans CJK KR", sans-serif;
    color: #aaa;
  }
`;

// kind, body top, body bottom, high, low
const daily = [
  ["r", 791, 796, 789, 797], ["b", 791, 798, 782, 798], ["b", 793, 800, 793, 809],
  ["b", 801, 802, 793, 802], ["b", 801, 804, 801, 804], ["r", 799, 804, 797, 804],
  ["r", 801, 802, 795, 816], ["b", 802, 805, 802, 805], ["r", 814, 819, 805, 819],
  ["b", 813, 819, 807, 821], ["b", 825, 826, 807, 827], ["r", 822, 836, 822, 836],
  ["b", 822, 827, 820, 828], ["r", 826, 830, 820, 830], ["r", 809, 824, 786, 824],
  ["b", 811, 817, 810, 817], ["b", 812, 817, 812, 822], ["r", 814, 817, 810, 817],
  ["r", 814, 815, 809, 820], ["r", 807, 817, 791, 817], ["b", 805, 809, 801, 809],
  ["r", 802, 809, 801, 815], ["r", 802, 803, 797, 805], ["b", 802, 808, 800, 808],
  ["b", 811, 814, 808, 815], ["r", 813, 817, 813, 817], ["r", 802, 814, 799, 818],
  ["b", 802, 803, 797, 806], ["b", 802, 807, 799, 807], ["b", 805, 810, 803, 819],
  ["r", 804, 810, 803, 814], ["b", 804, 808, 794, 808], ["b", 807, 814, 807, 814],
  ["b", 813, 816, 811, 816], ["r", 815, 818, 815, 818], ["b", 807, 816, 807, 816],
  ["b", 815, 819, 809, 822], ["r", 818, 819, 817, 824], ["r", 817, 819, 811, 820],
  ["r", 816, 819, 813, 820], ["r", 810, 815, 809, 819], ["r", 807, 811, 805, 815],
  ["r", 804, 808, 804, 812], ["r", 802, 804, 801, 809], ["r", 800, 805, 797, 805],
  ["r", 791, 799, 788, 800], ["r", 784, 790, 775, 792], ["b", 787, 790, 784, 792],
  ["b", 789, 792, 781, 793], ["r", 789, 792, 786, 798], ["b", 789, 801, 789, 803],
  ["r", 777, 798, 739, 800], ["b", 778, 805, 773, 805], ["b", 808, 813, 798, 813],
  ["r", 787, 813, 759, 833], ["b", 776, 783, 767, 784], ["r", 781, 783, 772, 787],
  ["r", 780, 781, 777, 789], ["r", 693, 753, 693, 777], ["r", 664, 675, 655, 698],
].map(([kind, ...ys], i) => [kind, 234 + i * 11, ...ys]);

// days with a bar taller than one pixel
const dailyVolume = { 14: 4, 19: 4, 45: 2, 46: 2, 48: 2, 51: 22, 52: 4, 53: 2, 54: 24, 55: 6, 56: 3, 57: 3, 58: 76, 59: 68 };
const dailyKinds = "brbbrbrbrbrbbrrbbrbrbbrbbbrbbrbbbrbbbrbbbrbbrrrbrbbrbbrbbbrb";

const dailyLines = [
  ["#339966", 2, "238,735 262,734 305,734 327,736 370,738 403,740 458,741 525,743 590,746 680,748 870,748 887,747"],
  ["#777", 1, "255,736 299,739 355,743 403,747 437,752 465,756 497,759 550,763 620,769 675,774 718,778 750,781 790,784 830,786 887,787"],
  [GREEN, 1, "238,772 285,777 325,780 365,785 410,788 460,792 506,795 572,797 654,803 720,807 771,806 822,805 858,804 878,802 886,801"],
  [GOLD, 2, "237,796 266,799 332,799 373,803 434,809 506,813 546,813 587,809 659,810 720,810 761,806 822,803 848,800 868,795 883,785 887,783"],
  [NAVY, 1, "237,793 276,793 312,797 337,803 363,810 393,816 419,819 439,819 475,813 506,810 531,809 577,806 603,809 638,811 664,814 689,814 715,812 735,808 761,799 781,794 807,794 837,793 863,790 871,784 887,769"],
  [MAGENTA, 1, "237,790 261,793 297,800 327,804 353,814 381,824 419,820 444,814 475,808 496,806 526,807 577,806 603,811 628,815 654,817 679,816 705,811 720,807 740,799 766,791 797,789 822,797 842,793 863,788 877,770 887,741"],
  ["#000", 2, "238,785 514,785 516,784 875,784 887,783"],
];

function DailyChart() {
  const priceY = (p) => Math.round(652 + (12000 - p) * 0.0348) + 0.5;
  const volY = (v) => Math.round(1013 - v * 0.118) + 0.5;
  return (
    <FloatChart>
      <svg viewBox="232 613 758 420">
        <rect x="923" y="613" width="67" height="420" fill="#d6e1ef" />
        <rect x="232" y="1015" width="758" height="18" fill="#d6e1ef" />
        <g stroke="#d6d6d6">
          {range(7).map((i) => (
            <path key={i} d={`M233 ${priceY(12000 - i * 1000)}H922`} />
          ))}
          {range(3).map((i) => (
            <path key={i} d={`M233 ${volY(250 + i * 250)}H922`} />
          ))}
        </g>
        <path d="M299.5 614V1014M497.5 614V1014M717.5 614V1014" stroke="#339966" />
        <Lines data={dailyLines} />
        <Candles data={daily} width={9} />
        <rect x="233" y="894" width="689" height="2" fill="#ff6a00" />
        {daily.map(([, x], i) => {
          const h = dailyVolume[i] || 1;
          const up = [14, 19, 48, 51, 54, 58].includes(i) || (i < 50 && dailyKinds[i] === "r");
          return (
            <rect
              key={x}
              x={x}
              y={1013 - h}
              width="9"
              height={h}
              fill={up ? "#f00" : "#36f"}
            />
          );
        })}
        <g fill="#00f">
          <path d="M884 636h6v5h3l-6 6-6-6h3zM873 674h6v5h3l-6 6-6-6h3z" />
          <text x="234" y="837">최저 6,730 (09/09)</text>
          <path d="M340 833h9v-5l6 5.5-6 5.5v-5h-9z" />
        </g>
        <g fill="#f00">
          <text x="757" y="663">최고 11,900 (11/22)</text>
          <path d="M868 659h9v-5l6 5.5-6 5.5v-5h-9z" />
        </g>
        <g stroke="#000">
          <path d="M232 613.5H990M232.5 613V1033M923.5 614V1033M989.5 613V1033" />
          <path d="M232 881.5H990M232 1014.5H990M232 1032.5H990" />
          <path d="M299.5 1014v18M497.5 1014v18M717.5 1014v18" />
          {range(33).map((i) => (
            <path key={i} d={`M923 ${priceY(12400 - i * 200)}h${i % 5 === 2 ? 6 : 2}`} />
          ))}
          {range(22).map((i) => (
            <path key={i} d={`M923 ${volY(i * 50)}h${i % 5 ? 2 : 6}`} />
          ))}
        </g>
        <g fill="#444">
          {range(7).map((i) => (
            <text key={i} x="931" y={Math.floor(priceY(12000 - i * 1000)) + 4}>
              {fmt(12000 - i * 1000)}
            </text>
          ))}
          <text x="931" y="898">1,000</text>
          <text x="931" y="928">750.00</text>
          <text x="931" y="957">500.00</text>
          <text x="931" y="987">250.00</text>
          <text x="234" y="1027">2024/08</text>
          <text x="301" y="1027">09</text>
          <text x="499" y="1027">10</text>
          <text x="719" y="1027">11</text>
          <text x="932" y="1027">11/22</text>
        </g>
        <text x="924" y="626" fill={RED}>LC:73.11</text>
        <text x="924" y="638" fill={BLUE}>HC:-2.10</text>
        <rect x="928" y="657" width="58" height="13" fill={RED} />
        <text x="932" y="668" fill="#fff">11,650</text>
        <rect x="930" y="671" width="40" height="10" fill="#d6e1ef" />
        <text x="932" y="680" fill={RED}>7.87%</text>
        <rect x="236.5" y="887.5" width="4" height="6" fill="#ccc" stroke="#777" />
        <text x="246" y="895" fill="#000" style={{ fontSize: 13 }}>N거래대금억단위</text>
        <rect x="978" y="885" width="7" height="7" fill="#333" />
        <path d="M980 887l3 3m0-3l-3 3" stroke="#fff" />
      </svg>
      <ChartLegend alt />
    </FloatChart>
  );
}

/* ---------- status bar ---------- */

const StatusBar = styled.footer`
  height: 45px;
  display: flex;
  background: #cdd6c0;
`;

const StatusGrid = styled.div`
  flex: 1;
  display: grid;
  grid-template-columns: 613fr 613fr 1314fr;
  grid-template-rows: 22px 22px;
  row-gap: 1px;
  background: #e2e9da;
`;

const IndexCell = styled.div`
  display: flex;
  align-items: center;
  gap: 14px;
  padding-right: 10px;
  border-right: 1px solid #e2e9da;
  background: #cdd6c0;
  white-space: nowrap;
  font-size: 12px;
  color: #000;
  b {
    width: 75px;
    height: 21px;
    margin-right: -1px;
    padding-left: 7px;
    line-height: 21px;
    font-weight: normal;
    color: #333;
    background: #b5c3a4;
  }
  em {
    font-style: normal;
    color: #dc3232;
  }
  .down {
    color: #1414d2;
  }
  svg {
    margin-left: auto;
  }
`;

const NewsCell = styled.div`
  display: flex;
  align-items: center;
  gap: 14px;
  padding-left: 10px;
  background: #cdd6c0;
  white-space: nowrap;
  a {
    flex: 1;
    color: #333;
    text-decoration: none;
  }
  time {
    font-size: 12px;
  }
  > svg {
    margin-right: -3px;
  }
`;

const NewsEnd = styled.div`
  width: 94px;
  height: 22px;
  display: flex;
  align-items: center;
  button {
    flex: 1;
    height: 22px;
    border-left: 1px solid #e2e9da;
  }
  .news {
    height: 20px;
    border: 0;
    background: #d97f4c;
    color: #fff;
  }
`;

const Toast = styled.div`
  position: absolute;
  right: 548px;
  bottom: -4px;
  width: 340px;
  height: 17px;
  padding: 1px 8px 0 6px;
  display: flex;
  justify-content: space-between;
  border: 1px solid #3d5220;
  background: #75904a;
  color: #fff;
  line-height: 15px;
`;

const menus =
  "기능 주식 주식주문 ETF/ELW 신용/대출 주식대여 로보마켓 영웅검색 캐치(KATCH) 투자정보 차트 선물옵션 선/옵주문 CFD주식 채널K 종목추천 SPECIAL 빅데이터 ELS/ELB/채권 금융상품 미국주식 해외주식 온라인업무 고객서비스 보기".split(" ");

const tabs =
  "키움주문 주식종합 키움현재 관심종목 조건검색 영웅검색 종합차트 일지차트 해외주식 잔고확인 미니주문 호가주문 바로주문 쾌속주문 펼친주문 월드티커 채널K 거래변동".split(" ");
const cornered = [5, 6, 8];

const Controls = styled.div`
  display: flex;
  flex-direction: column;
  padding: 5px 4px 3px;
  hr {
    width: calc(100% + 8px);
    margin: 3px -4px;
    border: 0;
    border-top: 1px solid #999;
  }
  ${ControlRow}:first-child {
    margin-bottom: 6px;
  }
`;

const Spacer = styled.span`
  flex: none;
  width: ${(p) => p.$w}px;
`;

export default function App() {
  return (
    <Desktop>
      <GlobalStyle />
      <TitleBar>
        <svg width="17" height="20" viewBox="0 0 17 20">
          <rect width="16" height="20" fill="#f4f0ee" />
          <path d="M9 1l1 4-3 3M3 5l5 3 5-2M8 8l-4 5M8 8l3 5 3 6M4 13l5-1M8 9l1 6-2 4" fill="none" stroke="#d0141c" strokeWidth="2" />
        </svg>
        <span className="name">영웅문</span>
        <TitleGroup $first>
          금융센터 1544-9000/1544-9911 | 주문 1544-4989 | ARS 1544-9900
          <Down color="#dfe6d2" />
        </TitleGroup>
        <TitleGroup color="#c3d2ad">
          채팅
          <svg width="18" height="20" viewBox="0 0 18 20">
            <path d="M2 8l5-3 6 1 1 9-5 4-6-3z" fill="#c3d2ad" />
            <path d="M7 9v7M12 8l-4 4 4 4" stroke="#6f8f4b" strokeWidth="1.5" fill="none" />
            <path d="M9 7l4-4-3-1h7v6l-2-2-4 4z" fill="#c3d2ad" />
          </svg>
          <Home size={18} fill="#b9caa0" />
        </TitleGroup>
        <TitleGroup>
          <Screens>
            {range(8).map((i) => (
              <button key={i} className={i === 5 ? "on" : ""}>{i + 1}</button>
            ))}
          </Screens>
        </TitleGroup>
        <TitleGroup color="#c3d2ad">
          <svg width="86" height="20" viewBox="0 0 86 20" fill="none" stroke="#c3d2ad">
            <path d="M4 4h11v8H4zM9.5 12v4M6 16.5h7" strokeWidth="2" />
            <path d="M8 7h4v3H8z" fill="#c3d2ad" />
            <path d="M27 15h10" strokeWidth="2" />
            <path d="M49 9h7v7h-7zM52 8V4h8v8h-3" strokeWidth="1.5" />
            <path d="M71 4l10 12M81 4L71 16" />
          </svg>
        </TitleGroup>
      </TitleBar>

      <MenuBar>
        {menus.map((m) => (
          <a key={m} href="#menu" className={m === "로보마켓" || m === "빅데이터" ? "hot" : ""}>
            {m}
          </a>
        ))}
        <div className="mdi">
          <MdiButton aria-label="최소화">
            <svg width="10" height="10"><path d="M1 8h6" stroke="#222" strokeWidth="2" /></svg>
          </MdiButton>
          <MdiButton aria-label="복원">
            <svg width="10" height="10" fill="none" stroke="#222"><path d="M1 4.5h5v4H1zM3.5 4V1.5h5v5H6" /></svg>
          </MdiButton>
          <MdiButton aria-label="닫기">
            <svg width="10" height="10"><path d="M2 2l6 6M8 2L2 8" stroke="#222" strokeWidth="1.5" /></svg>
          </MdiButton>
        </div>
      </MenuBar>

      <ToolStrip>
        <Grip $light>x<i /></Grip>
        <SearchPill>
          <input aria-label="메뉴 검색" />
          <Down color="#aaa" />
          <Search size={13} strokeWidth={3} />
        </SearchPill>
        <QuickIcons>
          {quickIcons.map(([label, tone, icon]) => (
            <button key={label} className={tone} aria-label={label}>
              <svg width="16" height="16" fill="none">{icon}</svg>
            </button>
          ))}
        </QuickIcons>
        <Group>
          <svg width="8" height="29"><path d="M4 11v8l-4-4z" fill="#666" /></svg>
        </Group>
        <StripTab $w={75}>추천메뉴<Down /></StripTab>
        <StripTab $w={76} $strong>주식툴바<Down /></StripTab>
        {tabs.map((t, i) => (
          <StripTab key={t} $corner={cornered.includes(i)}>{t}</StripTab>
        ))}
        <StripClock>
          <svg width="16" height="16"><circle cx="8" cy="8" r="7" fill="#f4f4f0" stroke="#777" /><path d="M5 6h6l-3 4z" fill="#555" /></svg>
          <svg width="18" height="20">
            <path d="M1.5 4.5h15v14h-15z" fill="#f4f4f0" stroke="#777" />
            <path d="M1 5h16M3 1v4M6 1v4M9 1v4M12 1v4M15 1v4" stroke="#555" strokeWidth="1.5" />
            <text x="3" y="17" fill="#333">22</text>
          </svg>
          <span>09:33:55</span>
        </StripClock>
        <DrawTools>
          {drawIcons.map(([label, icon]) => (
            <button key={label} aria-label={label}>
              <svg width="22" height="22" viewBox="0 0 24 23" fill="none">{icon}</svg>
            </button>
          ))}
        </DrawTools>
      </ToolStrip>

      <Controls>
        <ControlRow $gap={2}>
          <Select label="계좌번호" value="****-**35" w={91} pad={4} />
          <TextBox aria-label="비밀번호" defaultValue="********" $w={58} />
          <Button $w={116} $bg="#f6cfc8">매매마크/내역 조회</Button>
          <Button $w={78}>최근매매종목</Button>
          <Buttons items={["잔", "체", "미"]} />
          <Button $w={78}>매매내역보기</Button>
          <Spacer $w={12} />
          <Button $w={80}>일별잔고</Button>
          <Button $w={80}>매매수익</Button>
          <Button $w={80}>수익률추이</Button>
          <Check><input type="checkbox" />계좌연동</Check>
        </ControlRow>
        <ControlRow>
          <Group $mr={1}>
            <Button $w={20} aria-label="패널"><PanelIcon /></Button>
          </Group>
          <Select label="종목코드" value="008830" w={58} />
          <Group $mr={3}>
            <Button $w={17} aria-label="종목 검색"><Search size={13} color="#666" strokeWidth={3} /></Button>
          </Group>
          <Group $mr={2}>
            <Button $w={18} aria-label="소리"><SpeakerIcon /></Button>
            <Button $w={11} aria-label="소리 설정"><Down /></Button>
          </Group>
          <StockName $w={89}><b>신</b><span>대동기어</span><Corner /></StockName>
          <Spacer $w={3} />
          <Button $w={20}>!</Button>
          <Spacer $w={2} />
          <Button $w={20} $bg="#f6cfc8">일</Button>
          <Select label="일 주기" value="1" w={34} pad={7} on />
          <Spacer $w={5} />
          <Buttons items={["주", "월", "년"]} w={18} mr={2} />
          <Buttons items={["분", "초", "틱"]} on="분" mr={2} />
          <Buttons items={["1", "3", "5", "10", "15", "30", "45", "60"]} on="1" small />
          <Select label="분 주기" value="1" w={40} pad={9} />
          <TextBox aria-label="조회 개수" defaultValue="98" $w={30} $align="right" />
          <Count>/903</Count>
          <Spacer $w={4} />
          <ChartTools />
          <Spacer $w={2} />
          <Check><input type="checkbox" />D</Check>
          <Spacer $w={2} />
          <TextBox aria-label="기준일" defaultValue="11/22" $w={41} />
          <Button $w={20} aria-label="달력"><CalendarIcon /></Button>
        </ControlRow>
        <hr />
        <ControlRow $gap={3}>
          <QuoteBar />
          <Button $w={40} $bg="#f6cfc8">매수</Button>
          <Button $w={40} $bg="#c5dcf5">매도</Button>
        </ControlRow>
      </Controls>

      <MainChart />
      <ChartScroll thumb={235} h={20} margin="0 4px" />

      <StatusBar>
        <Grip>x<i /></Grip>
        <StatusGrid>
          <IndexCell>
            <b>KOSPI200</b>
            <em>332.21</em>
            <em>▲ 2.72</em>
            <em>0.83%</em>
            <span>21,182</span>
            <Down />
          </IndexCell>
          <IndexCell>
            <b>KOSPI 종합</b>
            <em>2,500.62</em>
            <em>▲19.99</em>
            <em>0.81%</em>
            <span>120,042</span>
            <Down />
          </IndexCell>
          <NewsCell>
            <a href="#news">[한경유레카] 범양건영 오전 강세..유레카 수익률 244.4% 달성</a>
            <time>09:33:42</time>
            <span>한국경제</span>
            <Down />
            <NewsEnd><button className="news">뉴스</button></NewsEnd>
          </NewsCell>
          <IndexCell>
            <b>KOSPI 등락</b>
            <em>▲637(↑0)</em>
            <span>86</span>
            <em className="down">▼209(↓0)</em>
            <Down />
          </IndexCell>
          <IndexCell>
            <b>NASDAQ</b>
            <em>18,972.42</em>
            <em>▲ 6.28</em>
            <em>0.03%</em>
            <span>7,574,917,100</span>
            <Down />
          </IndexCell>
          <NewsCell>
            <a href="#news">日 11월 지분은행 제조업 PMI 49.0…전월 대비 하락</a>
            <time>09:32:45</time>
            <span>연합인포</span>
            <Down />
            <NewsEnd>
              <Settings size={14} color="#777" strokeWidth={3} />
              <Spacer $w={8} />
              <button>체결</button>
              <button>감시</button>
            </NewsEnd>
          </NewsCell>
        </StatusGrid>
      </StatusBar>
      <Toast>
        체결내역통보
        <svg width="11" height="14"><path d="M2 3l7 9M9 3l-7 9" stroke="#000" strokeWidth="3" /><path d="M2 3l7 9M9 3l-7 9" stroke="#fff" /></svg>
      </Toast>

      <FloatWindow>
        <FloatRows>
          <ControlRow>
            <Group $mr={1}>
              <Button $w={20} aria-label="패널"><PanelIcon /></Button>
            </Group>
            <Select label="주기" value="주" w={31} />
            <Spacer $w={2} />
            <Button $w={20}>전</Button>
            <Spacer $w={1} />
            <Select label="종목" value="008830" w={69} />
            <Group $mr={1}>
              <Button $w={19} aria-label="종목 검색"><Search size={13} color="#666" strokeWidth={3} /></Button>
            </Group>
            <Group $mr={1}>
              <Button $w={17} aria-label="소리"><SpeakerIcon /></Button>
              <Button $w={11} aria-label="소리 설정"><Down /></Button>
            </Group>
            <StockName $w={82}><b>신</b><span>대동기어</span><Corner /></StockName>
            <Spacer $w={1} />
            <Buttons items={["일", "주", "월", "년"]} on="일" mr={1} />
            <Buttons items={["분", "초", "틱"]} mr={1} />
            <Buttons items={["1", "3", "5", "10", "20", "30", "60"]} dim small />
            <Button $w={22} $dim $small>120</Button>
            <Select label="사용자 주기" value="" w={36} disabled />
            <Spacer $w={1} />
            <TextBox aria-label="조회 봉수" defaultValue="60" $w={30} $align="right" />
            <Count>/600</Count>
            <Spacer $w={4} />
            <ChartTools mr={1} />
            <TextBox aria-label="기준년" defaultValue="2" $w={12} $pad={1} />
          </ControlRow>
          <ControlRow $gap={2}>
            <QuoteBar />
            <Button $w={40} $bg="#f6cfc8" aria-label="매수" />
          </ControlRow>
        </FloatRows>
        <DailyChart />
        <ChartScroll thumb={36} h={18} />
      </FloatWindow>
      <Clock>
        am<time>09:33:55</time>
        <small>11/22 금</small>
      </Clock>
    </Desktop>
  );
}
